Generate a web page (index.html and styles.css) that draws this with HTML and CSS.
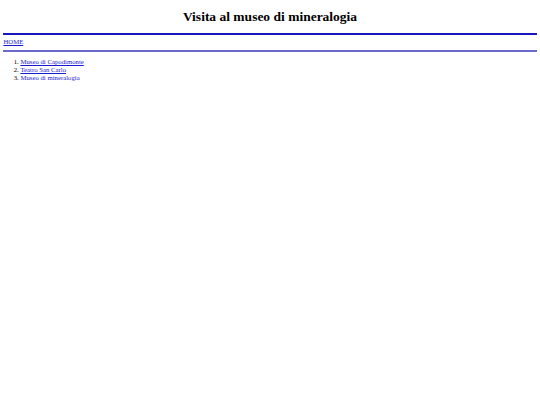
FILE: index.html
```html
<!DOCTYPE html>
<html lang="it">
<head>
<meta charset="utf-8">
<title>Visita al museo di mineralogia</title>
<link rel="stylesheet" href="styles.css">
</head>
<body>
<h1 class="title">Visita al museo di mineralogia</h1>
<hr class="rule rule-top">
<nav class="nav"><a href="#">HOME</a></nav>
<hr class="rule rule-bottom">
<ol class="list">
<li><a href="#">Museo di Capodimonte</a></li>
<li><a href="#">Teatro San Carlo</a></li>
<li><a href="#">Museo di mineralogia</a></li>
</ol>
</body>
</html>
```

FILE: styles.css
```css
html, body {
  background: #ffffff;
}
body {
  margin: 3.4px;
  font-family: "Liberation Serif", "Times New Roman", serif;
  font-size: 6.75px;
  color: #000;
}
a {
  color: #1a1ad0;
}
.title {
  font-size: 13.5px;
  font-weight: bold;
  text-align: center;
  margin: 6px 0 0;
  line-height: 15.5px;
}
.rule {
  border: 0;
  margin: 0;
  height: 2px;
}
.rule-top {
  margin-top: 8px;
  background: #1717bb;
}
.rule-bottom {
  background: #6a6acb;
}
.nav {
  padding: 3.5px 0 3.5px;
  line-height: 8px;
}
.list {
  margin: 6.5px 0 0;
  padding-left: 17px;
  line-height: 7.6px;
}
```
